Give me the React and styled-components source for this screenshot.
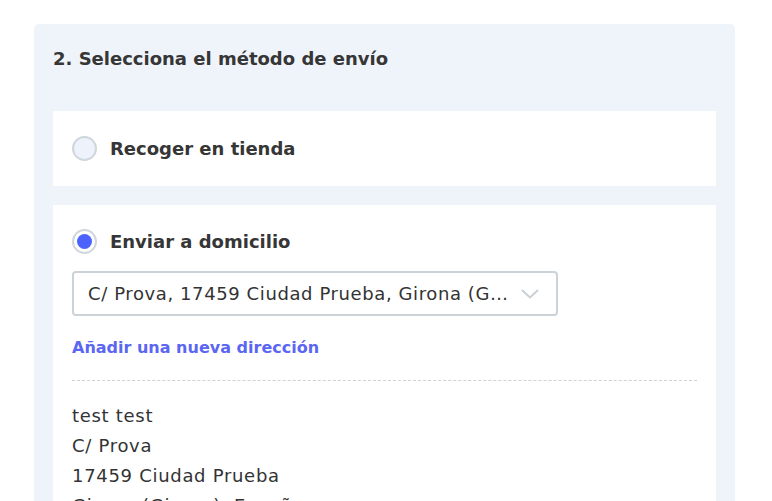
import React from "react";
import styled, { createGlobalStyle } from "styled-components";

const Global = createGlobalStyle`
  html, body { margin: 0; padding: 0; background: #ffffff; }
  body { font-family: "DejaVu Sans", "Open Sans", sans-serif; color: #333333; }
  * { box-sizing: border-box; }
`;

const Page = styled.div`
  padding: 24px 37px 0 34px;
  height: 501px;
  overflow: hidden;
`;

const Panel = styled.section`
  background: #eff4fb;
  border-radius: 5px 5px 0 0;
  padding: 0 19px 40px 19px;
  display: flex;
  flex-direction: column;
`;

const Heading = styled.h2`
  margin: 0;
  padding: 22px 0 0 0;
  height: 87px;
  font-size: 18px;
  font-weight: 700;
  color: #363636;
  line-height: 26px;
`;

const Options = styled.div`
  display: flex;
  flex-direction: column;
  gap: 19px;
`;

const Card = styled.div`
  background: #ffffff;
  padding: ${(p) => (p.$open ? "24px 19px 30px" : "25px 19px")};
  display: flex;
  flex-direction: column;
`;

const OptionRow = styled.label`
  display: flex;
  align-items: center;
  gap: 13px;
  height: 25px;
  cursor: pointer;
`;

const Radio = styled.span`
  width: 25px;
  height: 25px;
  border-radius: 50%;
  border: 2px solid #cfd6dc;
  background: ${(p) => (p.$checked ? "#ffffff" : "#eef3fb")};
  display: flex;
  align-items: center;
  justify-content: center;
  flex: none;
  &::after {
    content: "";
    display: ${(p) => (p.$checked ? "block" : "none")};
    width: 15px;
    height: 15px;
    border-radius: 50%;
    background: #4b63fc;
  }
`;

const OptionLabel = styled.span`
  font-size: 18px;
  font-weight: 700;
  color: #363636;
`;

const Select = styled.div`
  margin-top: 17px;
  width: 486px;
  height: 45px;
  border: 2px solid #ccd3d8;
  border-radius: 4px;
  display: flex;
  align-items: center;
  padding: 0 17px 0 14px;
  gap: 11px;
`;

const SelectText = styled.span`
  flex: 1;
  font-size: 18px;
  letter-spacing: 0.6px;
  color: #333333;
  white-space: nowrap;
  overflow: hidden;
  text-overflow: ellipsis;
`;

const AddLink = styled.a`
  margin-top: 20px;
  font-size: 16px;
  font-weight: 700;
  color: #5b66f2;
  text-decoration: none;
  line-height: 24px;
`;

const Divider = styled.hr`
  margin: 20px 0 0 0;
  border: 0;
  border-top: 1px dashed #cdd2d6;
  height: 0;
`;

const Address = styled.div`
  margin-top: 20px;
  font-size: 18px;
  letter-spacing: 0.7px;
  line-height: 30px;
  color: #333333;
`;

const Chevron = () => (
  <svg width="18" height="10" viewBox="0 0 18 10" fill="none">
    <path d="M1.5 1.5 L9 8.5 L16.5 1.5" stroke="#c9d1d6" strokeWidth="2" strokeLinecap="round" strokeLinejoin="round" />
  </svg>
);

export default function App() {
  return (
    <>
      <Global />
      <Page>
        <Panel>
          <Heading>2. Selecciona el método de envío</Heading>
          <Options>
            <Card>
              <OptionRow>
                <Radio />
                <OptionLabel>Recoger en tienda</OptionLabel>
              </OptionRow>
            </Card>
            <Card $open>
              <OptionRow>
                <Radio $checked />
                <OptionLabel>Enviar a domicilio</OptionLabel>
              </OptionRow>
              <Select>
                <SelectText>C/ Prova, 17459 Ciudad Prueba, Girona (Girona), España</SelectText>
                <Chevron />
              </Select>
              <AddLink href="#">Añadir una nueva dirección</AddLink>
              <Divider />
              <Address>
                <div>test test</div>
                <div>C/ Prova</div>
                <div>17459 Ciudad Prueba</div>
                <div>Girona (Girona), España</div>
              </Address>
            </Card>
          </Options>
        </Panel>
      </Page>
    </>
  );
}
